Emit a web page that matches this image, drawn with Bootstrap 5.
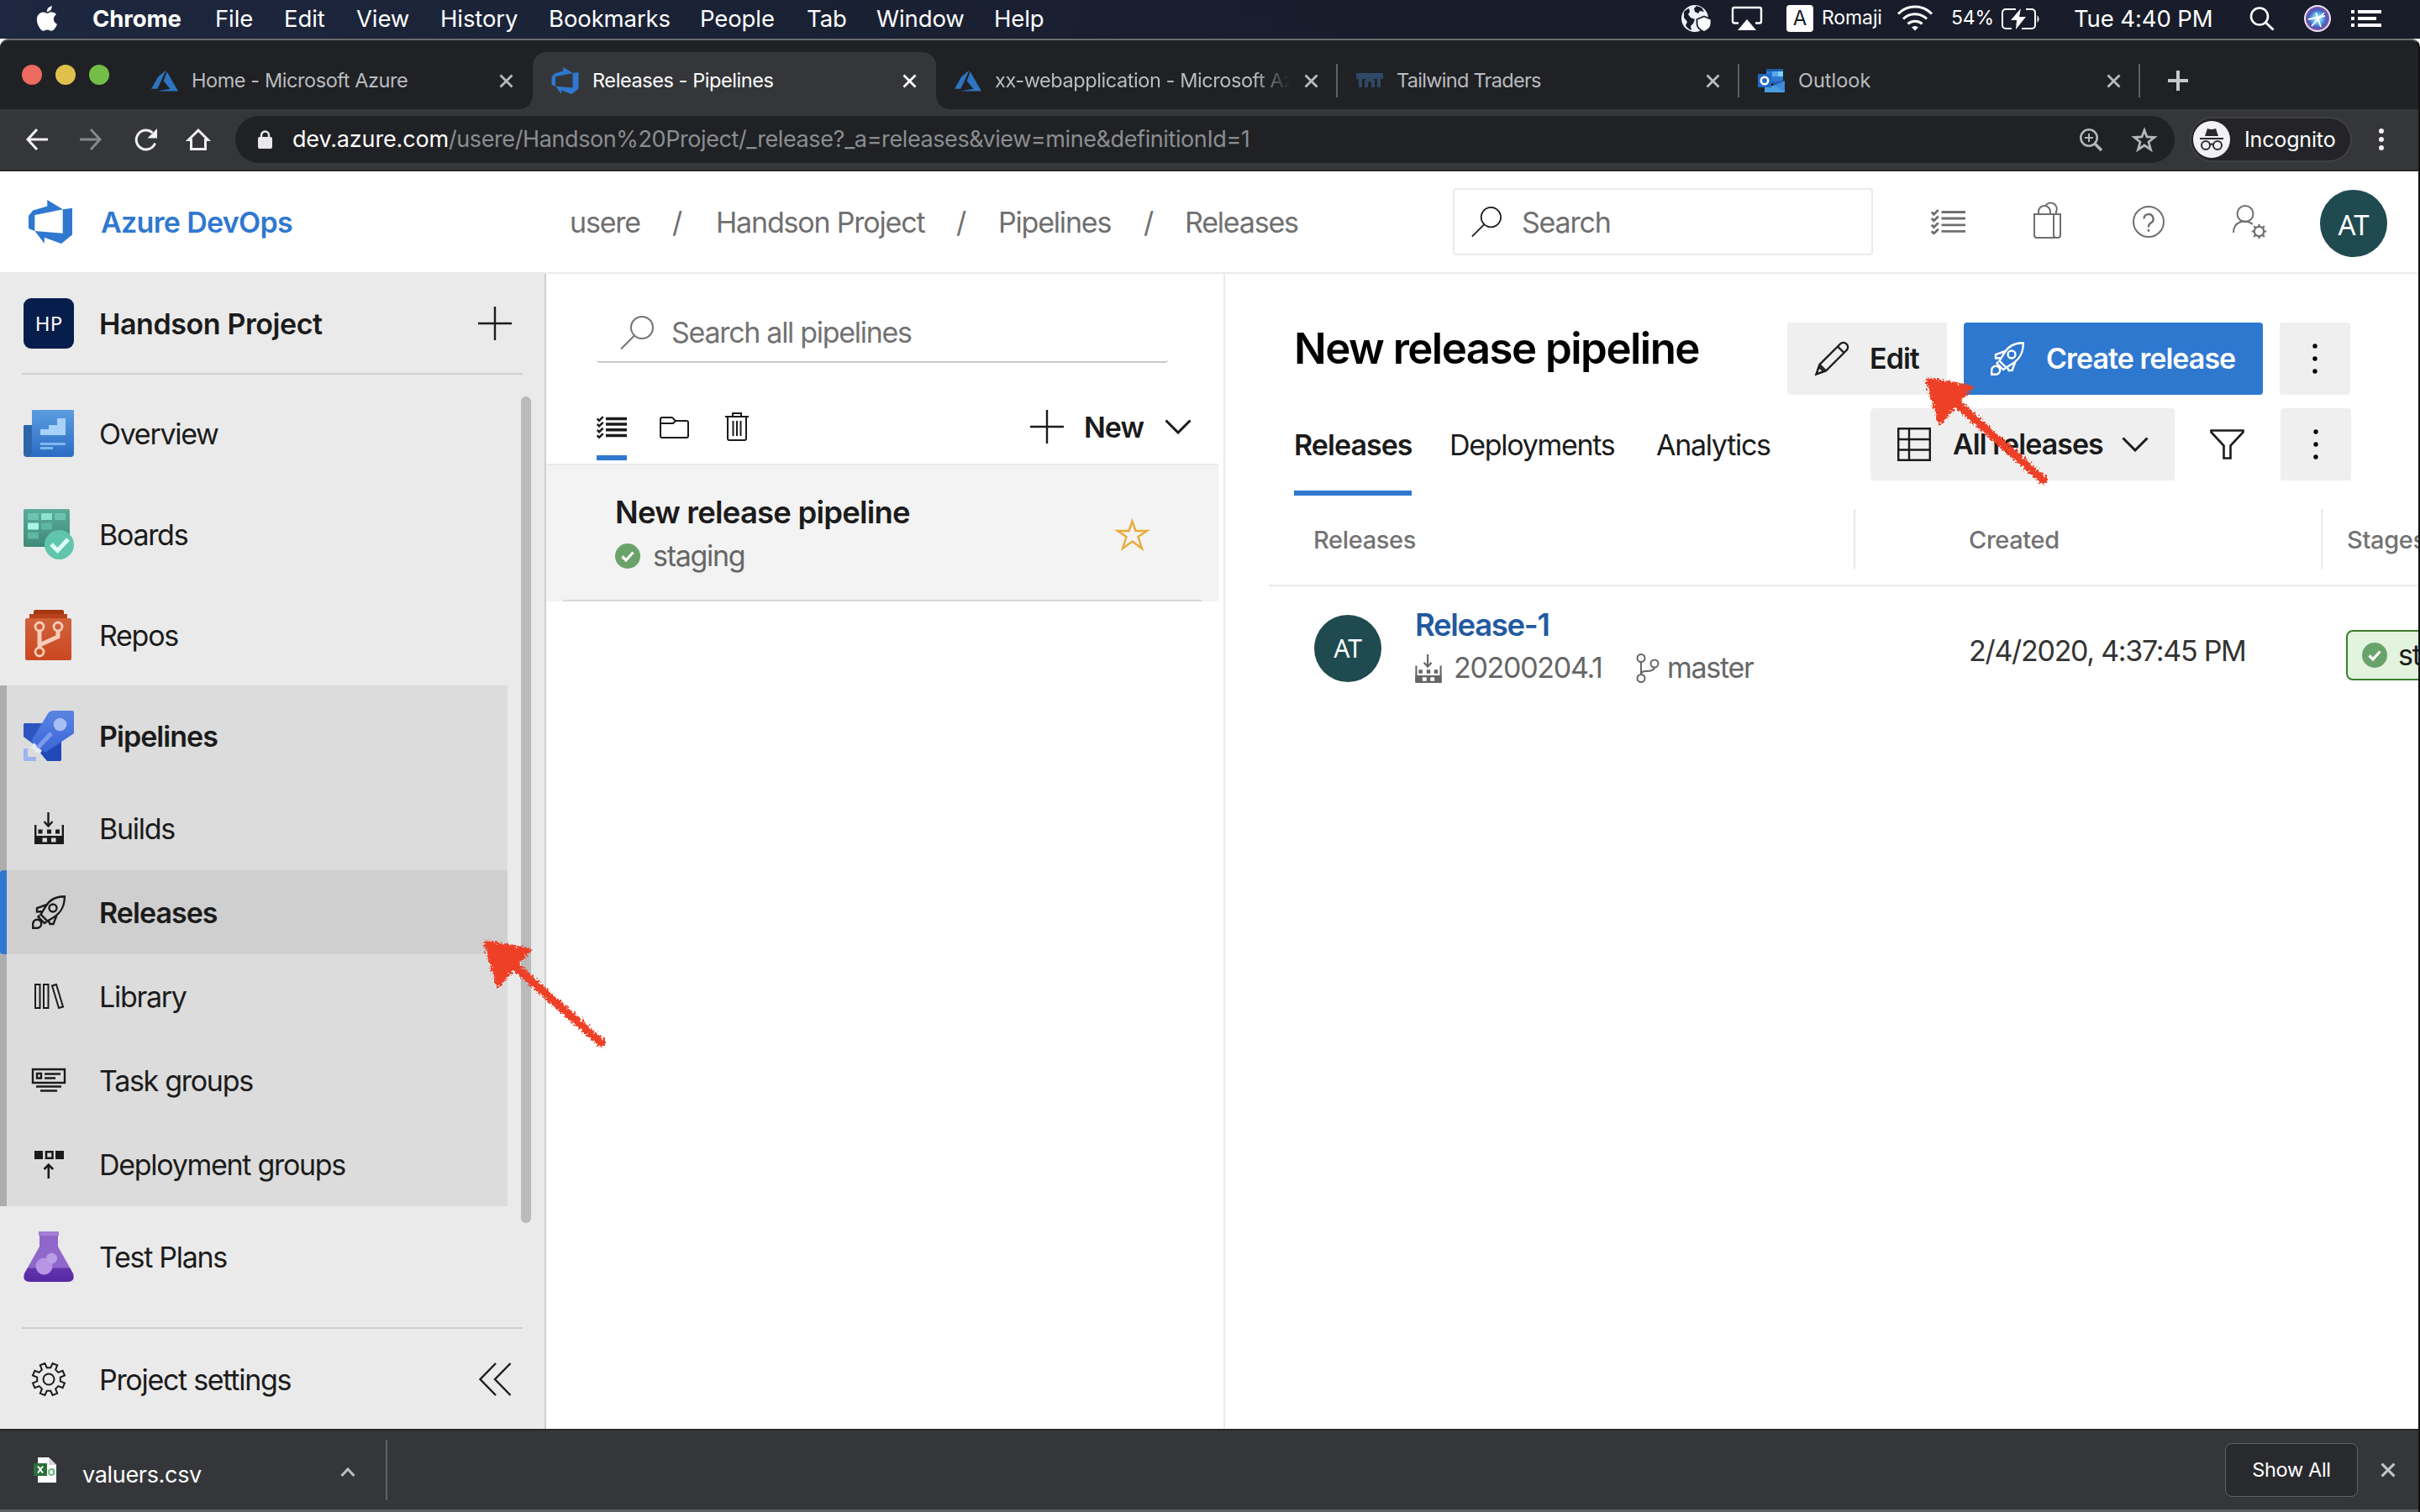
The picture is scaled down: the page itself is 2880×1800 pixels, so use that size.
<!DOCTYPE html>
<html lang="en">
<head>
<meta charset="utf-8">
<title>Releases - Pipelines</title>
<link href="https://cdn.jsdelivr.net/npm/bootstrap@5.3.0/dist/css/bootstrap.min.css" rel="stylesheet">
<style>
html,body{width:2880px;height:1800px;overflow:hidden}
body{font-family:Inter,"Liberation Sans",sans-serif;background:#fff;color:#1b1b1b;font-size:34px;line-height:1.2;letter-spacing:-.038em}
svg{display:block;flex:none;overflow:visible}
span,a{white-space:nowrap}
.fw-semibold{letter-spacing:-.028em}
.gridrow{display:grid;align-items:center}
.ln{fill:none;stroke:currentColor;stroke-width:2}
/* macOS menu bar */
.menubar{height:46px;padding-bottom:2px;background:linear-gradient(90deg,#1d273f,#181c2b 60%,#191c29);color:#fff;font-size:27.5px;letter-spacing:-.004em;
 grid-template-columns:67px 146px 82px 86px 100px 129px 180px 127px 83px 140px 818px 60px 65px 42px 90px 64px 60px 86px 209px 65px 56px 1fr;padding-left:43px}
.menubar .fsmall{font-size:23px}
.abox{width:32px;height:32px;border-radius:4px;background:#fff;color:#191c2b;font-size:24px;display:flex;align-items:center;justify-content:center}
/* browser chrome */
.frame{height:1754px;background:#202124;border-top:2px solid #6b6c6e;border-right:2px solid #111;border-radius:10px 10px 0 0}
.tabstrip{height:82px;padding-top:14px;grid-template-columns:158px 476px 480px 478px 478px 477px 1fr;font-size:23.5px;color:#bdc1c6;letter-spacing:-.018em}
.tight{letter-spacing:-.03em}
.loose{letter-spacing:0}
.lights{padding:0 0 14px 26px;gap:16px}
.lights i{width:24px;height:24px;border-radius:50%}
.lights .red{background:#ed6a5e}
.lights .amber{background:#e0c04c}
.lights .green{background:#72be47}
.tabx{height:68px;padding:0 23px 0 22px;gap:16px;color:#b9bcc0}
.tabx.live{background:#35363a;color:#fff;border-radius:16px 16px 0 0;position:relative}
.tabx.live:before,.tabx.live:after{content:"";position:absolute;bottom:0;width:16px;height:16px}
.tabx.live:before{left:-16px;background:radial-gradient(circle at 0 0,transparent 15.5px,#35363a 16px)}
.tabx.live:after{right:-16px;background:radial-gradient(circle at 100% 0,transparent 15.5px,#35363a 16px)}
.tabx.ruled{background:linear-gradient(#5f6063,#5f6063) right center/2px 40px no-repeat}
.fade-end{overflow:hidden;-webkit-mask:linear-gradient(90deg,#000 88%,transparent);width:351px}
.newtab{margin-left:33px}
.toolbar{height:74px;background:#35363a;border-bottom:2px solid #28282b;color:#f1f1f3;padding-left:31px;grid-template-columns:64px 65px 63px 57px 2326px 217px 1fr}
.omni{width:2308px;height:56px;border-radius:28px;background:#202124;font-size:27px;padding:0 21px 0 27px;color:#8b8e92;letter-spacing:-.0148em}
.omni b{font-weight:400;color:#fff;letter-spacing:-.006em}
.chip{width:193px;height:54px;border-radius:27px;background:#242428;border:2px solid #3f4044;color:#fff;font-size:25px;padding-left:2px;gap:17px;letter-spacing:-.006em}
/* Azure DevOps header */
.adohead{height:122px;background:#fff;border-bottom:2px solid #eaeaea;color:#6f6f6f;letter-spacing:-.035em;padding-left:33px;grid-template-columns:87px 558px 122px 52px 286px 50px 173px 49px 319px 569px 122px 118px 119px 104px 1fr}
.adohead span{padding-top:3px}
.brandname{color:#2f78d0;font-weight:600;letter-spacing:-.02em}
.finder{width:500px;height:80px;border:2px solid #eaeaea;border-radius:4px;padding-left:20px;gap:24px}
.ava{width:80px;height:80px;border-radius:50%;background:#1f4a50;color:#fff;display:flex;align-items:center;justify-content:center;font-size:33px;flex:none;font-family:"Noto Sans",sans-serif;letter-spacing:0}
/* sidebar */
.page{height:1375px;background:#fff}
.side{width:650px;flex:none;background:#eaeaea;border-right:2px solid #cfcfcf}
.side span{padding-top:3px}
.proj{height:118px;padding:0 39px 0 28px;gap:30px}
.proj .fw-semibold{letter-spacing:-.012em}
.hp{width:60px;height:60px;border-radius:9px;background:#071d4c;color:#fff;font-size:24px;font-family:"Noto Sans",sans-serif;letter-spacing:0}
.hp span{padding-top:0}
.rule{height:2px;margin:0 26px;background:#cfcfcf}
.nav1{height:120px;padding-left:28px;gap:30px}
.nav2{height:100px;padding-left:20px;gap:30px}
.icobox{width:60px;display:flex;justify-content:center;flex:none}
.grp{background:#dcdcdc;border-left:8px solid #adadad}
.grp .nav1{padding-left:20px}
.nav2.sel{background:#cfcfcf;border-left:8px solid #2f78d0;margin-left:-8px;border-radius:4px}
.thumb{width:12px;height:984px;border-radius:6px;background:#bababa;margin:16px 0 0 16px}
/* pipelines list */
.list{width:808px;flex:none;border-right:2px solid #eaeaea}
.psearch{width:680px;height:70px;margin:36px 0 0 60px;border-bottom:2px solid #c8c8c8;border-radius:4px;color:#727272;padding-left:28px;gap:21px}
.ptools{height:122px;padding:34px 32px 0 60px;border-bottom:2px solid #eaeaea;width:800px}
.pitem{width:800px;height:162px;background:#f3f3f3}
.pitem-in{height:162px;width:760px;margin:0 20px;border-bottom:2px solid #d9d9d9;padding:0 63px 0 62px}
.blueline{height:6px;background:#2f78d0}
.name-lg{font-size:36.5px;line-height:56px;letter-spacing:-.022em}
/* detail */
.detail{padding-left:52px;overflow:hidden}
.h-big{font-size:51px;line-height:62px;width:587px;letter-spacing:-.03em}
.btnx{height:86px;background:#efefef;border-radius:4px;display:flex;align-items:center;font-weight:600;color:#1b1b1b;letter-spacing:-.028em;flex:none}
.btnx.pri{background:#2f78d0;color:#fff}
.dots{width:84px;justify-content:center}
.thead-x{color:#737373;font-size:29px;font-weight:500;letter-spacing:-.012em;height:108px;grid-template-columns:696px 2px 135px 419px 2px 1fr;border-bottom:2px solid #eaeaea;width:1368px}
.thead-x i{width:2px;height:72px;background:#eaeaea;margin-bottom:3px}
.rowx{grid-template-columns:120px 659px 449px 1fr;height:148px;padding-left:54px}
.rel-link{font-size:36.5px;line-height:51px;color:#235a9f;letter-spacing:-.036em}
.pill{width:200px;height:60px;border:2px solid #3b7f2a;border-radius:8px;background:#e2f3de;padding-left:17px;gap:13px;margin-top:16px}
.meta{color:#666}
/* download shelf */
.shelf{height:99px;background:#35363a;border-top:2px solid #28282b;border-bottom:3px solid #5e5f62;color:#fff;font-size:27px;letter-spacing:-.012em;padding-left:40px}
.showall{width:158px;height:64px;border:1px solid #5f6063;border-radius:8px;background:#292a2d;font-size:23.5px}
.arrowmark{position:absolute;width:150px;height:134px;pointer-events:none}
.a-one{left:571px;top:1115px}
.a-two{left:2287px;top:445px}
</style>
<script src="https://cdn.jsdelivr.net/npm/bootstrap@5.3.0/dist/js/bootstrap.bundle.min.js"></script>
</head>
<body>
<svg width="0" height="0" class="position-absolute">
<defs>
<linearGradient id="gOv" x2="0" y2="1"><stop stop-color="#5b9de0"/><stop offset="1" stop-color="#2b6cc4"/></linearGradient>
<linearGradient id="gBo" x2="0" y2="1"><stop stop-color="#5cab9a"/><stop offset="1" stop-color="#3f8a78"/></linearGradient>
<linearGradient id="gRe" x2="0" y2="1"><stop stop-color="#d0623c"/><stop offset="1" stop-color="#cb4721"/></linearGradient>
<linearGradient id="gPi" x2="0" y2="1"><stop stop-color="#5a84e2"/><stop offset="1" stop-color="#3a66d8"/></linearGradient>
<linearGradient id="gTe" x2="0" y2="1"><stop stop-color="#8f66c9"/><stop offset=".7" stop-color="#9068cc"/><stop offset=".72" stop-color="#6434ad"/><stop offset="1" stop-color="#5527a4"/></linearGradient>
<radialGradient id="gSi"><stop stop-color="#fff"/><stop offset=".35" stop-color="#6fc3f0"/><stop offset=".7" stop-color="#3f5fc0"/><stop offset="1" stop-color="#b04a9a"/></radialGradient>
<filter id="chalk" x="-10%" y="-10%" width="120%" height="120%"><feTurbulence type="fractalNoise" baseFrequency=".4" numOctaves="2" seed="4"/><feDisplacementMap in="SourceGraphic" scale="10" xChannelSelector="R" yChannelSelector="G"/></filter>
<symbol id="x" viewBox="0 0 17 17"><path d="M1.500 1.500l14 14m0-14l-14 14" stroke="currentColor" stroke-width="2.800" fill="none"/></symbol>
<symbol id="azure" viewBox="0 0 24 24"><path fill="#2f74c0" d="M5.483 21.300H24L14.025 4.013l-3.038 8.347 5.836 6.938L5.483 21.300zM13.230 2.700L6.105 8.677 0 19.253h5.505v.014L13.230 2.700z"/></symbol>
<symbol id="devops" viewBox="1 1 16 16"><path fill="#2f78d0" d="M17 4v9.740l-4 3.280-6.200-2.260V17l-3.510-4.590 10.230.8V4.440zm-3.410.49L7.850 1v2.290L2.580 4.840 1 6.870v4.610l2.260 1V6.570z"/></symbol>
<symbol id="rocket" viewBox="0 0 40 40"><path class="ln" style="stroke-width:2.4" d="M38.800 1.200C28 1 21 5 16.500 13L10.500 22.500 18.500 30.500 26 26C35 20 39 13 38.800 1.200ZM19 10.500L6 15V19.500L13 19M29.500 23.500L25.500 34H21.500L19.500 29.500M9 23.500L7.500 25.500 15 33 17.500 31.500M1.200 38.800V34A5 5 0 1 1 6 38.800Z"/><circle class="ln" style="stroke-width:2.4" cx="25" cy="15" r="4.500"/></symbol>
<symbol id="build" viewBox="0 0 35 38"><path class="ln" style="stroke-width:2.4" d="M16.500 0V16M11.500 11l5 5.500 5-5.500M1.200 15V37M33.800 15V37"/><path fill="currentColor" d="M4.500 20.500h5v5h-5zM15 20.500h5v5h-5zM25 20.500h5v5h-5z"/><path fill="currentColor" fill-rule="evenodd" d="M0 28H35V38H0ZM9.500 30.500V35.500H15V30.500ZM20 30.500V35.500H25.500V30.500Z"/></symbol>
<symbol id="checks" viewBox="0 0 41 30"><path fill="none" stroke="currentColor" stroke-width="var(--sw,2.8)" d="M12.500 3.500H41M12.500 11H41M12.500 18.800H41M12.500 26.300H41"/><path fill="none" stroke="currentColor" stroke-width="2.800" d="M.8 3.500l2.700 2.700L8.800 1M.8 11l2.700 2.700L8.800 8.500M.8 18.800l2.700 2.700 5.300-5.200M.8 26.300L3.500 29l5.300-5.200"/></symbol>
<symbol id="mag" viewBox="0 0 40 40"><circle class="ln" cx="26" cy="14" r="13"/><path class="ln" d="M17 23.500L1 39.500"/></symbol>
<symbol id="okdot" viewBox="0 0 30 30"><circle cx="15" cy="15" r="15" fill="#6aa36a"/><path d="M8.500 15.500l4.500 4.500 8.500-9.500" fill="none" stroke="#fff" stroke-width="3.200"/></symbol>
<symbol id="vdots" viewBox="0 0 6 36"><circle cx="3" cy="3" r="2.700"/><circle cx="3" cy="18" r="2.700"/><circle cx="3" cy="33" r="2.700"/></symbol>
<symbol id="chev" viewBox="0 0 32 18"><path d="M1.500 1.500L16 16 30.500 1.500" fill="none" stroke="currentColor" stroke-width="3"/></symbol>
<symbol id="redarrow" viewBox="0 0 150 134"><g filter="url(#chalk)" fill="#ee4126" stroke="#ee4126" stroke-linejoin="round" stroke-linecap="round"><path stroke-width="5" d="M7 7L58 16 42 34 22 58Z"/><path d="M36 30L145 127" stroke-width="10"/></g></symbol>
</defs>
</svg>

<nav class="menubar gridrow">
<svg width="25" height="32" viewBox="1 0 13.600 16"><path fill="#fff" d="M11.182.008C11.148-.03 9.923.023 8.857 1.180c-1.066 1.156-.902 2.482-.878 2.516s1.520.087 2.475-1.258.762-2.391.728-2.430m3.314 11.733c-.048-.096-2.325-1.234-2.113-3.422s1.675-2.789 1.698-2.854-.597-.79-1.254-1.157a3.700 3.700 0 0 0-1.563-.434c-.108-.003-.483-.095-1.254.116-.508.139-1.653.589-1.968.607-.316.018-1.256-.522-2.267-.665-.647-.125-1.333.131-1.824.328-.49.196-1.422.754-2.074 2.237-.652 1.482-.311 3.830-.067 4.560s.625 1.924 1.273 2.796c.576.984 1.340 1.667 1.659 1.899s1.219.386 1.843.067c.502-.308 1.408-.485 1.766-.472.357.013 1.061.154 1.782.539.571.197 1.111.115 1.652-.105.541-.221 1.324-1.059 2.238-2.758q.52-1.185.473-1.282"/></svg>
<span class="fw-bold tight-0">Chrome</span><span>File</span><span>Edit</span><span>View</span><span>History</span><span>Bookmarks</span><span>People</span><span>Tab</span><span>Window</span><span>Help</span>
<svg width="36" height="33" viewBox="0 0 36 33"><circle cx="16" cy="16" r="16" fill="#eef0fb"/><path fill="#191c2b" d="M3 8Q6 5 9 4L10 8 8 11 11 15 16 17 14 22 11 25 12 30Q7 28 5 24L7 20 3 15zM18 1L24 3 27 8 22 7 20 10 16 8 15 4z"/><path d="M27 13.500l8.500 3.500v5c0 5-4 8-8.500 10-4.500-2-8.500-5-8.500-10v-5z" fill="#fff" stroke="#191c2b" stroke-width="1.800"/></svg>
<svg width="37" height="29" viewBox="0 0 37 29"><path class="ln" style="stroke-width:2.4" d="M8 19.500H3a2 2 0 0 1-2-2V3a2 2 0 0 1 2-2H33a2 2 0 0 1 2 2V17.500a2 2 0 0 1-2 2H28"/><path fill="#fff" d="M18 15L29 28H7z"/></svg>
<div class="abox"><span>A</span></div><span class="fsmall">Romaji</span>
<svg width="42" height="30" viewBox="0 0 42 30"><path fill="none" stroke="#fff" stroke-width="3" d="M1 9.500a28 28 0 0 1 40 0M7 15.500a20 20 0 0 1 28 0M12.500 21.500a12.500 12.500 0 0 1 17 0"/><path fill="#fff" d="M17 25.500a6 6 0 0 1 8 0l-4 4z"/></svg>
<span class="fsmall">54%</span>
<svg width="47" height="25" viewBox="0 0 47 25"><path class="ln" d="M17 1H5a4 4 0 0 0-4 4V20a4 4 0 0 0 4 4H12M29 1H36a4 4 0 0 1 4 4V20a4 4 0 0 1-4 4H24"/><path fill="#fff" d="M23 0L11 14H18L17 25 29 10H21zM42.500 8q4 4.500 0 9z"/></svg>
<span>Tue 4:40 PM</span>
<svg width="30" height="29" viewBox="0 0 30 29"><circle class="ln" style="stroke-width:2.6" cx="12" cy="11.500" r="10"/><path class="ln" style="stroke-width:3" d="M19 18.500l9.500 9"/></svg>
<svg width="32" height="32" viewBox="0 0 32 32"><circle cx="16" cy="16" r="15" fill="url(#gSi)" stroke="#e8e6f2" stroke-width="2"/><path d="M5 17l20-4M14 9l6 17M9 25L24 9" stroke="#fff" stroke-width="1.800"/></svg>
<svg width="37" height="20" viewBox="0 0 37 20"><path stroke="#fff" stroke-width="4" d="M0 2H4M8 2H36M0 10H4M8 10H30M0 18H4M8 18H36"/></svg>
</nav>

<div class="frame">
<div class="tabstrip gridrow">
<div class="lights d-flex align-items-center"><i class="red"></i><i class="amber"></i><i class="green"></i></div>
<div class="tabx d-flex align-items-center"><svg width="32" height="32"><use href="#azure"/></svg><span>Home - Microsoft Azure</span><svg class="ms-auto" width="17" height="17"><use href="#x"/></svg></div>
<div class="tabx live d-flex align-items-center"><svg width="33" height="32"><use href="#devops"/></svg><span>Releases - Pipelines</span><svg class="ms-auto" width="17" height="17"><use href="#x"/></svg></div>
<div class="tabx ruled d-flex align-items-center"><svg width="32" height="32"><use href="#azure"/></svg><span class="fade-end">xx-webapplication - Microsoft Az</span><svg class="ms-auto" width="17" height="17"><use href="#x"/></svg></div>
<div class="tabx ruled d-flex align-items-center"><svg width="32" height="18" viewBox="0 0 32 18"><path fill="#2f4868" d="M0 0H32V7H29V17H25V7H20L22 9V17H18V12L16 9 14 12V17H10V9L12 7H7V17H3V7H0z"/></svg><span class="tight">Tailwind Traders</span><svg class="ms-auto" width="17" height="17"><use href="#x"/></svg></div>
<div class="tabx ruled d-flex align-items-center"><svg width="32" height="28" viewBox="0 0 32 28"><path fill="#1c5ba8" d="M10 0H30V4H10z"/><path fill="#2f78d0" d="M10 3h20v14H10z"/><path fill="#5ba9ea" d="M17 3h7v6h-7z"/><path fill="#7ad3fb" d="M24 3h6v6h-6z"/><path fill="#2560b0" d="M17 15h7l6-2v5l-10 4z"/><path fill="#4a9ee2" d="M8 22L22 19 32 14V28H8z"/><path fill="#2f78d0" d="M32 28L20 19.500 32 14z" opacity=".5"/><rect y="6" width="16" height="16" rx="1" fill="#2068c4"/><circle cx="8" cy="14" r="4.200" fill="none" stroke="#fff" stroke-width="2.600"/></svg><span class="loose">Outlook</span><svg class="ms-auto" width="17" height="17"><use href="#x"/></svg></div>
<svg class="newtab" width="24" height="24" viewBox="0 0 24 24"><path d="M12 0V24M0 12H24" stroke="#c6c8cb" stroke-width="4"/></svg>
</div>
<div class="toolbar gridrow">
<svg width="26" height="26" viewBox="0 0 26 26"><path class="ln" style="stroke-width:3" d="M26 13H2M13 1L2 13 13 25"/></svg>
<svg width="26" height="26" viewBox="0 0 26 26" color="#86878a"><path class="ln" style="stroke-width:3" d="M0 13H24M13 1L24 13 13 25"/></svg>
<svg width="27" height="27" viewBox="0 0 27 27"><path class="ln" style="stroke-width:3" d="M24.500 17.500A11.500 11.500 0 1 1 21.500 5"/><path fill="currentColor" d="M27 0V11.500H15.500z"/></svg>
<svg width="26" height="26" viewBox="0 0 26 26"><path class="ln" style="stroke-width:3" d="M1.500 13.500H4.500V24.500H21.500V13.500H24.500L13 2Z"/></svg>
<div class="omni d-flex align-items-center">
<svg width="17" height="22" viewBox="0 0 17 22"><rect y="8" width="17" height="14" rx="2" fill="#e8e8ea"/><path d="M4 9V6a4.500 4.500 0 0 1 9 0V9" fill="none" stroke="#e8e8ea" stroke-width="2.400"/></svg>
<span class="ms-4"><b>dev.azure.com</b>/usere/Handson%20Project/_release?_a=releases&amp;view=mine&amp;definitionId=1</span>
<svg class="ms-auto" width="27" height="27" viewBox="0 0 27 27" color="#b5b6b9"><circle class="ln" style="stroke-width:2.6" cx="11" cy="11" r="9.700"/><path class="ln" d="M6 11H16M11 6V16"/><path class="ln" style="stroke-width:3.6" d="M18 18L26 26"/></svg>
<svg style="margin-left:35px" width="30" height="28" viewBox="0 0 30 28"><path d="M15 3L18 11 27 11.500 20 17 22.500 26 15 21 7.500 26 10 17 3 11.500 12 11Z" fill="none" stroke="#b5b6b9" stroke-width="2.800"/></svg>
</div>
<div class="chip d-flex align-items-center"><svg width="44" height="44" viewBox="0 0 44 44"><circle cx="22" cy="22" r="22" fill="#f1f2f4"/><path fill="#2a2a2e" d="M17 9q5 2 10 0l3 9H14z"/><path fill="none" stroke="#2a2a2e" stroke-width="2" d="M8 21H36M20 28.500q2-2 4 0"/><circle cx="15" cy="29" r="5" fill="none" stroke="#2a2a2e" stroke-width="2"/><circle cx="29" cy="29" r="5" fill="none" stroke="#2a2a2e" stroke-width="2"/></svg><span>Incognito</span></div>
<svg class="ms-2" width="6" height="26" viewBox="0 0 6 26" fill="#f1f1f3"><circle cx="3" cy="3" r="3"/><circle cx="3" cy="13" r="3"/><circle cx="3" cy="23" r="3"/></svg>
</div>

<header class="adohead gridrow">
<svg width="54" height="52"><use href="#devops"/></svg>
<span class="brandname">Azure DevOps</span>
<span>usere</span><span>/</span><span>Handson Project</span><span>/</span><span>Pipelines</span><span>/</span><span>Releases</span>
<div class="finder d-flex align-items-center"><svg width="36" height="36" color="#1b1b1b"><use href="#mag"/></svg><span>Search</span></div>
<svg width="41" height="30"><use href="#checks"/></svg>
<svg width="33" height="40" viewBox="0 0 33 40"><path class="ln" d="M1 11H32V36a3 3 0 0 1-3 3H4a3 3 0 0 1-3-3ZM24 11V36a3 3 0 0 0 3 3M6 11V8a7 7 0 0 1 14 0v3M14 1.500A7 7 0 0 1 27 8v3"/></svg>
<svg width="38" height="38" viewBox="0 0 38 38"><circle class="ln" cx="19" cy="19" r="18"/><path class="ln" style="stroke-width:2.4" d="M13.500 15.500a5.500 5.500 0 1 1 8 5c-2 1-2.500 2-2.500 5M19 28v2.800"/></svg>
<svg width="40" height="40" viewBox="0 0 40 40"><circle class="ln" cx="15" cy="10.500" r="9.500"/><path class="ln" d="M1 33C1 20 14 16 24 23"/><g transform="translate(31.500 31.500) scale(.44)"><circle r="13" fill="none" stroke="currentColor" stroke-width="5"/><path d="M0-12V-20M0 12V20M12 0H20M-12 0H-20M9 9l5.500 5.500M-9 9l-5.500 5.500M9-9l5.500-5.500M-9-9l-5.500-5.500" stroke="currentColor" stroke-width="5"/></g></svg>
<div class="ava mt-1"><span>AT</span></div>
</header>

<div class="page d-flex">
<aside class="side">
<div class="proj d-flex align-items-center"><div class="hp d-flex align-items-center justify-content-center"><span>HP</span></div><span class="fw-semibold">Handson Project</span><svg class="ms-auto" width="40" height="40" viewBox="0 0 40 40"><path class="ln" style="stroke-width:2.4" d="M20 0V40M0 20H40"/></svg></div>
<div class="rule"></div>
<div class="d-flex" style="padding-top:10px">
<div style="width:604px">
<div class="nav1 d-flex align-items-center"><svg width="60" height="56" viewBox="0 0 60 56"><path fill="#2d66a8" d="M1 18H14V56H4a4 4 0 0 1-4-4V19z"/><path fill="url(#gOv)" d="M11 0H59a1 1 0 0 1 1 1V52a4 4 0 0 1-4 4H5q5-1 5-5V1a1 1 0 0 1 1-1z"/><path fill="#a9d2fb" d="M20 23H30V18H40V10H50V30H20z"/><path fill="#7fb8f0" d="M20 39H50V42H20zM20 44H35V47H20z"/></svg><span>Overview</span></div>
<div class="nav1 d-flex align-items-center"><svg width="60" height="60" viewBox="0 0 60 60"><rect width="55" height="45" rx="2" fill="url(#gBo)"/><path fill="#6cc4b0" d="M5 5H18V13H5zM37 5H50V13H37z"/><path fill="#8be2cf" d="M21 5H34V13H21z"/><path fill="#a8f6e6" d="M5 16.500H18V24.500H5z"/><path fill="#5cb7a2" d="M21 16.500H34V24.500H21zM5 27.500H18V35.500H5z"/><circle cx="42.500" cy="42.500" r="17.500" fill="#5fc5ac"/><path d="M33 42l7.500 7.500L53 36" fill="none" stroke="#dffff6" stroke-width="5"/></svg><span>Boards</span></div>
<div class="nav1 d-flex align-items-center"><svg width="60" height="60" viewBox="0 0 60 60"><path fill="#a6380f" d="M14 0H46a2 2 0 0 1 2 2V10H12V2a2 2 0 0 1 2-2z"/><path fill="#ba411c" d="M7 5H52V12H7z"/><rect x="2" y="10" width="55" height="50" rx="2" fill="url(#gRe)"/><g fill="none" stroke="#f8cdb9"><path stroke-width="5" d="M19 25V45M41 25V32L19 42"/><g stroke-width="2.800"><circle cx="19" cy="20" r="5"/><circle cx="41" cy="20" r="5"/><circle cx="19" cy="50" r="5"/></g></g></svg><span>Repos</span></div>
<div class="grp">
<div class="nav1 d-flex align-items-center fw-semibold"><svg width="60" height="60" viewBox="0 0 60 60"><path fill="#2c55bf" d="M1 15H25L12 40 0 31V16z"/><path fill="#2249b8" d="M45 34V59l-1 1H28L17 47z"/><path fill="url(#gPi)" d="M34 0H58a2 2 0 0 1 2 2V27L26 50 9 36 30 2z"/><circle cx="43.500" cy="16.500" r="7.800" fill="#a9bef2"/><path d="M17 44L33 27" stroke="#7d9bec" stroke-width="5"/><path fill="#9bb3f0" d="M0 45H5V55H15V60H0z"/><path fill="#e9edfa" d="M12 38L15 41 14 44 19 46 22 47 20 51 17 49 15 51 12 46 8 44 11 42z"/></svg><span>Pipelines</span></div>
<div class="nav2 d-flex align-items-center"><div class="icobox"><svg width="35" height="38"><use href="#build"/></svg></div><span>Builds</span></div>
<div class="nav2 sel d-flex align-items-center fw-semibold"><div class="icobox"><svg width="40" height="40"><use href="#rocket"/></svg></div><span>Releases</span></div>
<div class="nav2 d-flex align-items-center"><div class="icobox"><svg width="35" height="30" viewBox="0 0 35 30"><path class="ln" d="M1 1H6.500V29H1ZM11 1H16.500V29H11ZM21 2.500L26 1 34 27.500 29 29Z"/></svg></div><span>Library</span></div>
<div class="nav2 d-flex align-items-center"><div class="icobox"><svg width="40" height="28" viewBox="0 0 40 28"><path class="ln" style="stroke-width:2.4" d="M1 1H39V17H1ZM6 6H11V11.500H6ZM15 6.500H34M15 11.500H28M5 21.500H35M10 26.500H30"/></svg></div><span>Task groups</span></div>
<div class="nav2 d-flex align-items-center"><div class="icobox"><svg width="35" height="33" viewBox="0 0 35 33"><path fill="currentColor" d="M0 0H10V10H0zM25 0H35V10H25z"/><path class="ln" style="stroke-width:2.6" d="M14 1.300H21.500V8.700H14ZM16.800 33V16M11.500 22l5.300-5.500 5.300 5.500"/></svg></div><span>Deployment groups</span></div>
</div>
<div class="nav1 d-flex align-items-center"><svg width="60" height="60" viewBox="0 0 60 60"><path fill="url(#gTe)" d="M19 3H41V18L59 50q3 10-7 10H8q-10 0-7-10L19 18z"/><path fill="#a27ed8" d="M18 0H42V5H18z"/><circle cx="24.500" cy="41.500" r="10" fill="#b795e4"/><circle cx="33.500" cy="32" r="6.500" fill="#bb9de6"/></svg><span>Test Plans</span></div>
</div>
<div class="thumb"></div>
</div>
<div class="rule mt-4"></div>
<div class="d-flex align-items-center" style="height:119px;padding:0 40px 0 28px;gap:30px"><div class="icobox"><svg width="40" height="40" viewBox="-20 -20 40 40"><path class="ln" d="M13.800 2.300L19 4.600 16.600 10.200 11.400 8.100 8.100 11.400 10.200 16.600 4.600 19 2.300 13.800-2.300 13.800-4.600 19-10.200 16.600-8.100 11.400-11.400 8.100-16.600 10.200-19 4.600-13.800 2.300-13.800-2.300-19-4.600-16.600-10.200-11.400-8.100-8.100-11.400-10.200-16.600-4.600-19-2.300-13.800 2.300-13.800 4.600-19 10.200-16.600 8.100-11.400 11.400-8.100 16.600-10.200 19-4.600 13.800-2.300Z"/><circle class="ln" r="6.500"/></svg></div><span>Project settings</span><svg class="ms-auto" width="38" height="40" viewBox="0 0 38 40"><path class="ln" style="stroke-width:2.4" d="M20 1L1.500 20 20 39M37.500 1L19 20 37.500 39"/></svg></div>
</aside>

<section class="list">
<div class="psearch d-flex align-items-center"><svg width="40" height="40"><use href="#mag"/></svg><span>Search all pipelines</span></div>
<div class="ptools d-flex">
<div style="width:36px;margin-top:29px"><svg width="36" height="27" style="--sw:4"><use href="#checks"/></svg><div class="blueline" style="margin-top:20px"></div></div>
<svg style="margin:30px 0 0 39px" width="35" height="26" viewBox="0 0 35 26"><path class="ln" d="M1 8H16L19 5H32a2 2 0 0 1 2 2V23a2 2 0 0 1-2 2H3a2 2 0 0 1-2-2V3A2 2 0 0 1 3 1H14a2 2 0 0 1 2 1L19 5"/></svg>
<svg style="margin:25px 0 0 43px" width="28" height="34" viewBox="0 0 28 34"><path class="ln" d="M0 5H28M9 5V1H19V5M3 5V31a2 2 0 0 0 2 2H23a2 2 0 0 0 2-2V5M9.500 10V28M14 10V28M18.500 10V28"/></svg>
<div class="ms-auto d-flex align-items-center fw-semibold" style="height:84px"><svg width="40" height="40" viewBox="0 0 40 40"><path class="ln" style="stroke-width:2.4" d="M20 0V40M0 20H40"/></svg><span style="margin:3px 25px 0 24px">New</span><svg width="32" height="18"><use href="#chev"/></svg></div>
</div>
<div class="pitem"><div class="pitem-in d-flex align-items-center"><div><div class="fw-semibold name-lg"><span>New release pipeline</span></div><div class="d-flex align-items-center meta" style="gap:15px;height:49px"><svg width="30" height="30"><use href="#okdot"/></svg><span>staging</span></div></div>
<svg class="ms-auto mt-1" width="39" height="38" viewBox="0 0 39 38"><path d="M19.500 3.500L23.500 15H37L26.500 22 31 36 19.500 27.500 8 36 12.500 22 2 15H15.500Z" fill="none" stroke="#eba938" stroke-width="2.400"/></svg></div></div>
</section>

<main class="detail flex-fill">
<div class="d-flex" style="padding:58px 80px 0 30px">
<span class="fw-semibold text-black h-big">New release pipeline</span>
<div class="btnx" style="width:190px;padding-left:33px;gap:25px"><svg width="40" height="40" viewBox="0 0 40 40"><path class="ln" style="stroke-width:2.4" d="M1.500 38.500L5.500 27 30 2.500a5 5 0 0 1 7.500 7.500L13 34.500ZM27 5.500L34.500 13M5.500 27L13 34.500M5 30L10 35"/></svg><span>Edit</span></div>
<div class="btnx pri" style="width:356px;margin-left:20px;padding-left:32px;gap:26px"><svg width="40" height="40"><use href="#rocket"/></svg><span>Create release</span></div>
<div class="btnx dots" style="margin-left:20px"><svg width="6" height="36"><use href="#vdots"/></svg></div>
</div>
<div class="d-flex" style="padding:16px 80px 0 30px">
<div class="d-flex" style="width:686px;height:104px;line-height:88px">
<div class="d-flex flex-column justify-content-between fw-semibold" style="width:140px;height:104px"><span>Releases</span><div class="blueline"></div></div>
<span style="margin-left:45px;width:201px">Deployments</span><span style="margin-left:45px">Analytics</span></div>
<div class="btnx" style="width:362px;padding-left:32px"><svg width="40" height="40" viewBox="0 0 40 40"><path class="ln" style="stroke-width:2.4" d="M1.200 1.200H38.800V38.800H1.200ZM14 1V39M1 14H39M1 26.500H39"/></svg><span style="margin-left:26px;width:201px">All releases</span><svg width="32" height="18"><use href="#chev"/></svg></div>
<svg style="margin:25px 0 0 42px" width="41" height="36" viewBox="0 0 41 36"><path class="ln" style="stroke-width:2.6" d="M1.500 1.500H39.500V3.500L24.500 19.500V34.500H16.500V19.500L1.500 3.500Z"/></svg>
<div class="btnx dots" style="margin-left:43px"><svg width="6" height="36"><use href="#vdots"/></svg></div>
</div>
<div class="thead-x gridrow"><span style="padding-left:53px">Releases</span><i></i><span></span><span>Created</span><i></i><span style="padding-left:29px">Stages</span></div>
<div class="rowx gridrow">
<div class="ava" style="font-size:30px"><span>AT</span></div>
<div style="margin-top:-4px"><div class="fw-semibold rel-link"><span>Release-1</span></div><div class="meta d-flex align-items-center" style="height:51px"><svg width="32" height="34"><use href="#build"/></svg><span style="margin-left:14px;width:217px">20200204.1</span><svg width="28" height="35" viewBox="0 0 28 35"><circle class="ln" cx="6" cy="5.500" r="4.500"/><circle class="ln" cx="6" cy="29.500" r="4.500"/><circle class="ln" cx="22" cy="12" r="4.500"/><path class="ln" d="M6 10V25M6 25q0-4 6-4 10 0 10-5"/></svg><span style="margin-left:9px">master</span></div></div>
<span style="color:#333;padding-top:6px">2/4/2020, 4:37:45 PM</span>
<div class="pill d-flex align-items-center"><svg width="30" height="30"><use href="#okdot"/></svg><span>staging</span></div>
</div>
</main>
</div>

<footer class="shelf d-flex align-items-center">
<svg width="28" height="30" viewBox="0 0 28 30"><path fill="#fff" d="M5 0H18L27 9V30H5z"/><path fill="#d5d5d5" d="M18 0V9H27z"/><path d="M24 13.500v7.500m0-4a3 3.500 0 1 0 0 1" fill="none" stroke="#5cb87a" stroke-width="1.800"/><rect y="7" x="0" width="16" height="15" fill="#2c6e3c"/><path d="M5 10.500l6 8m0-8l-6 8" stroke="#fff" stroke-width="2"/></svg>
<span style="margin:12px 0 0 30px;width:307px">valuers.csv</span>
<svg width="18" height="11" viewBox="0 0 18 11" class="mt-1"><path d="M1.500 10L9 2l7.500 8" fill="none" stroke="#bcbdc0" stroke-width="3"/></svg>
<div style="width:2px;height:72px;background:#5f6063;margin-left:36px"></div>
<div class="showall ms-auto d-flex align-items-center justify-content-center"><span>Show All</span></div>
<svg style="margin:0 27px" width="18" height="18" viewBox="0 0 17 17" color="#c4c5c8"><use href="#x"/></svg>
</footer>
</div>

<svg class="arrowmark a-one"><use href="#redarrow"/></svg>
<svg class="arrowmark a-two"><use href="#redarrow"/></svg>
</body>
</html>
